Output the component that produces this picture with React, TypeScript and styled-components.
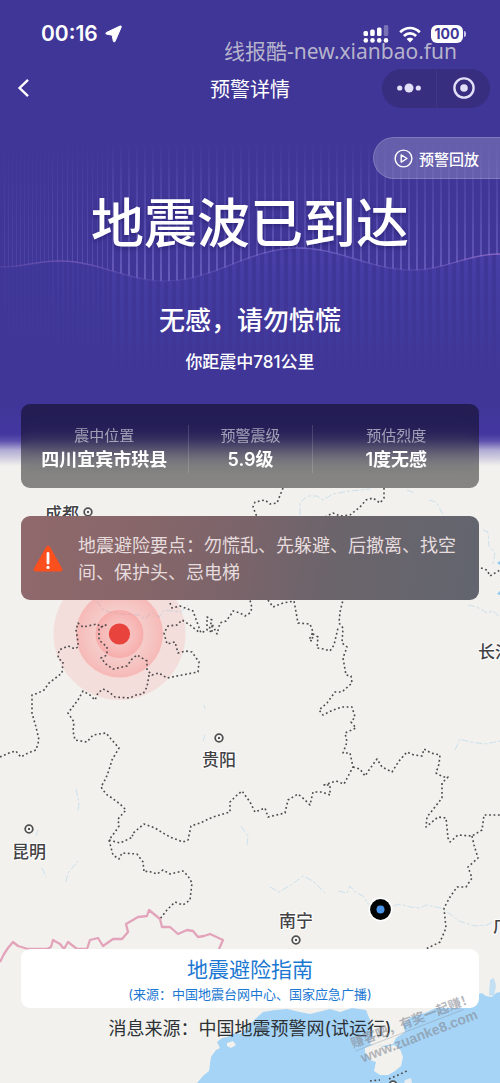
import React from "react";
import styled, { createGlobalStyle } from "styled-components";

const GlobalStyle = createGlobalStyle`
  *, *::before, *::after { box-sizing: border-box; }
  body {
    margin: 0;
    background: #f2f1ed;
    font-family: Inter, "Noto Sans CJK SC", sans-serif;
    -webkit-font-smoothing: antialiased;
  }
  button { font: inherit; color: inherit; border: 0; padding: 0; background: none; cursor: pointer; }
  h1, h2, p, dl, dt, dd { margin: 0; font-weight: inherit; }
`;

const Screen = styled.div`
  position: relative;
  display: flex;
  flex-direction: column;
  min-height: 100vh;
  overflow: hidden;
  color: #fff;
`;

const MapLayer = styled.svg`
  position: absolute;
  inset: 0;
  width: 100%;
  height: 100%;
`;

const HeroBackdrop = styled.div`
  position: absolute;
  top: 0;
  left: 0;
  right: 0;
  height: 470px;
  background: linear-gradient(
    to bottom,
    #3f3697 0,
    #3f3697 400px,
    #4337a0 434px,
    rgba(72, 58, 165, 0.88) 441px,
    rgba(110, 100, 185, 0.5) 450px,
    rgba(242, 241, 237, 0) 466px
  );
`;

const WaveArt = styled.svg`
  display: block;
  width: 100%;
  height: 400px;
`;

const Content = styled.div`
  position: relative;
  display: flex;
  flex: 1;
  flex-direction: column;
`;

const StatusBar = styled.div`
  display: flex;
  align-items: center;
  justify-content: space-between;
  height: 68px;
  padding: 0 37px 0 41px;
`;

const StatusGroup = styled.div<{ $gap: number }>`
  display: flex;
  align-items: center;
  gap: ${(p) => p.$gap}px;
`;

const Clock = styled.span`
  font: 600 21px/28px Inter, sans-serif;
`;

const Battery = styled.span`
  position: relative;
  width: 32px;
  height: 18px;
  border-radius: 6px;
  background: #fff;
  color: #3f3697;
  font: 700 14px/18px Inter, sans-serif;
  text-align: center;

  &::after {
    content: "";
    position: absolute;
    right: -3px;
    top: 6px;
    width: 2px;
    height: 6px;
    border-radius: 0 2px 2px 0;
    background: #c9c5e6;
  }
`;

const SiteMark = styled.span`
  position: absolute;
  top: 37px;
  right: 43px;
  color: rgba(205, 203, 214, 0.85);
  font: 400 21px/28px "Noto Sans", "Noto Sans CJK SC", sans-serif;
  white-space: nowrap;
`;

const NavBar = styled.header`
  display: grid;
  grid-template-columns: 1fr auto 1fr;
  align-items: center;
  height: 40px;
  padding: 0 10px;
`;

const BackButton = styled.button`
  display: flex;
  justify-self: start;
  padding: 0 6px;
`;

const NavTitle = styled.h1`
  padding-top: 4px;
  font-size: 20px;
  line-height: 28px;
`;

const Capsule = styled.div`
  display: grid;
  grid-template-columns: 1fr 1fr;
  justify-self: end;
  width: 108px;
  height: 39px;
  border-radius: 20px;
  background: #382e80;
`;

const CapsuleButton = styled.button`
  display: grid;
  place-items: center;

  & + & {
    border-left: 1px solid rgba(255, 255, 255, 0.04);
  }
`;

const ReplayButton = styled.button`
  display: flex;
  align-items: center;
  align-self: flex-end;
  gap: 6px;
  height: 42px;
  margin-top: 29px;
  padding: 0 21px 0 20px;
  border: 1px solid rgba(255, 255, 255, 0.18);
  border-right: 0;
  border-radius: 21px 0 0 21px;
  background: rgba(255, 255, 255, 0.2);
  font-size: 15px;
  font-weight: 500;
`;

const Headline = styled.h2`
  margin-top: 15px;
  font-size: 53px;
  font-weight: 500;
  line-height: 60px;
  text-align: center;
  text-shadow: 0 2px 4px rgba(20, 12, 80, 0.4);
`;

const Advice = styled.p`
  margin-top: 51px;
  font-size: 26px;
  font-weight: 500;
  line-height: 32px;
  text-align: center;
`;

const Distance = styled.p`
  margin-top: 13px;
  font-size: 17px;
  font-weight: 500;
  line-height: 24px;
  text-align: center;
`;

const Facts = styled.dl`
  display: grid;
  grid-template-columns: 4fr 3fr 4fr;
  margin: 30px 21px 0;
  padding: 21px 0 15px;
  border-radius: 9px;
  background: rgba(0, 0, 0, 0.45);
  backdrop-filter: blur(8px);
  text-align: center;
`;

const Fact = styled.div`
  & + & {
    border-left: 1px solid rgba(255, 255, 255, 0.14);
  }
`;

const FactLabel = styled.dt`
  color: rgba(255, 255, 255, 0.55);
  font-size: 15px;
  line-height: 22px;
`;

const FactValue = styled.dd`
  font-size: 18px;
  font-weight: 600;
  line-height: 26px;
`;

const Tips = styled.section`
  display: flex;
  align-items: center;
  gap: 15px;
  margin: 28px 21px 0;
  padding: 16px 18px 14px 12px;
  border-radius: 9px;
  background: linear-gradient(100deg, #90696c 0%, #876669 25%, #7a646a 48%, #6b646b 68%, #62656e 100%);
  color: #e6dcde;
  font-size: 18px;
  line-height: 27px;

  svg { flex: none; }
`;

const Footer = styled.footer`
  display: flex;
  flex-direction: column;
  gap: 7px;
  margin-top: auto;
  padding: 40px 21px 40px;
`;

const GuideButton = styled.button`
  display: flex;
  flex-direction: column;
  align-items: center;
  padding: 7px 0 4px;
  border-radius: 9px;
  background: #fff;
  color: #1b78d2;
`;

const GuideTitle = styled.span`
  font-size: 21px;
  line-height: 28px;
`;

const GuideSource = styled.span`
  font-size: 13px;
  line-height: 20px;
`;

const SourceNote = styled.p`
  color: #2c3136;
  font-size: 18px;
  line-height: 28px;
  text-align: center;
`;

const StampMark = styled.svg`
  position: absolute;
  right: 15px;
  bottom: 8px;
  width: 140px;
  height: 84px;
  pointer-events: none;
`;

const borders = [
  "M0 757L9 753L16 751L18 754L21 757L28 753L36 750L39 740L36 727L32 713L32 695L38 693L44 690L49 683L62 673L63 662L58 658L59 650L68 646L75 649L78 647L78 642L76 630L78 623L83 627L97 624L101 627L106 625L99 628L99 640L107 647L107 655L101 658L106 664L113 669L127 666L132 659L137 655L147 661L147 670L152 675L159 673L167 678L182 675L198 672L199 662L192 652L185 651L178 653L175 642L167 644L164 633L168 626L177 625L182 620L190 625L200 633",
  "M170 603L172 608L180 606L193 611L197 622L201 633L207 630L207 617L212 620L209 630L212 633L212 624L217 634L220 623L226 621L230 616L233 611L240 613L245 616L250 613L252 608L250 600",
  "M149 675L147 687L143 694L136 695L130 698L115 697L109 692L103 689L98 693L95 700L90 695L83 691L78 700L68 713L74 722L73 731L75 740L87 742L93 735L106 733L111 739L119 748L112 760L109 770L106 778L101 787L106 794L112 798L120 804L126 810L118 819L119 826L115 832L109 840L113 855L119 859L122 853L137 854L143 862L144 872L148 871L157 874L163 870L170 874L183 871L188 876L192 883L190 900L183 905L175 902L167 910L160 919",
  "M109 840L120 843L133 837L132 834L144 824L155 828L163 833L170 837L183 842L188 840L191 826L200 823L213 817L230 812L230 802L236 796L242 791L250 802L255 812L265 808L268 817L285 813L288 800L298 794L304 799L310 805L313 792L322 792L330 795L330 785L324 785L336 781L344 784L353 767L350 753L343 753L347 742L345 733L356 728L351 722L355 717L352 707L342 707L333 710L323 715L319 710L327 703L335 692L342 692L352 683L351 676L346 675L343 658L347 647L342 643L343 628L339 623L340 612L343 600",
  "M268 600L273 607L283 603L294 601L298 623L310 624L313 632L309 640L312 641L313 634L318 637L317 648L324 649L330 651L334 645L338 628",
  "M353 767L360 769L365 776L369 770L377 759L382 767L392 772L399 761L407 752L414 755L422 756L424 749L431 753L440 755L439 764L436 773L443 777L448 777L442 783L442 798L435 807L427 817L426 827L438 817L446 818L448 838L450 842L458 835L472 836L482 830L484 815L500 815",
  "M472 836L474 845L478 858L468 867L472 878L466 887L457 887L450 897L444 908L446 928L440 942L426 949",
  "M283 488L277 503L270 504L265 500L255 502L253 507L257 517",
  "M384 488L384 498L380 503L373 498L366 500L360 507L350 515L340 516L333 513L325 517",
  "M481 568L487 570L490 576L495 573L500 570",
  "M370 1081L380 1080M389 1079L407 1071",
];

const rivers = [
  "M300 515L300 503L307 496L317 496L323 500L333 494L350 491L360 490L370 489M407 490L415 493M429 500L436 502L440 509L444 516",
  "M97 601L104 611L122 614L139 615L145 619L152 612L159 617L164 610L181 612L188 605",
  "M483 530L488 532L489 546L495 553L493 564M468 605L477 607L487 613L493 611L500 617",
  "M38 830L36 836M76 789L79 803L78 812M42 868L46 877M66 882L68 873L78 861",
  "M241 826L248 836L247 845M203 741L205 735M204 705L205 709",
  "M270 887L279 892L291 885L303 876L313 881L325 893M338 891L347 893L350 886L355 892L363 896L368 904L386 908L400 904L410 907L420 908L426 905L441 908L450 914L459 921L475 926L487 925L495 921",
  "M455 750L460 739L470 742L485 744L500 741",
];

const nationalBorder =
  "M0 962L4 954L8 948L13 942L18 946L28 949L47 949L51 947L53 940L60 944L64 949L68 942L77 949L87 949L90 940L98 938L103 946L113 939L122 939L128 932L126 924L138 917L147 916L149 910L160 919L162 927L170 927L178 934L187 930L193 931L198 937L204 936L210 934L223 940L219 949";

const sea =
  "M197 1083L203 1076L209 1071L211 1057L216 1050L220 1048L217 1042L222 1038L227 1037L235 1033L240 1034L246 1029L254 1020L263 1012L275 1010L287 1009L300 1012L310 1014L330 1009L340 1012L352 1008L366 1010L370 1020L373 1035L370 1044L382 1046L393 1044L396 1038L405 1032L403 1024L411 1017L425 1013L440 1006L465 996L476 995L482 993L486 996L492 997L496 993L500 992V1083Z";

const hainan =
  "M365 1048L374 1044L384 1047L394 1045L400 1049L403 1057L401 1066L395 1071L388 1075L380 1075L374 1071L376 1062L370 1060L365 1052Z";

const cities = [
  { name: "成都", x: 45, y: 520, dotX: 88, dotY: 512 },
  { name: "贵阳", x: 202, y: 766, dotX: 219, dotY: 738 },
  { name: "昆明", x: 12, y: 858, dotX: 29, dotY: 829 },
  { name: "南宁", x: 279, y: 927, dotX: 296, dotY: 940 },
  { name: "长沙", x: 478, y: 658 },
  { name: "广州", x: 493, y: 932 },
];

// Height of the seismic curve, interpolated between its crests and troughs.
const wavePoints = [
  [0, 267], [60, 261], [165, 281], [298, 248], [412, 270], [500, 254],
];

function waveHeight(x: number) {
  for (let i = 1; i < wavePoints.length; i++) {
    const [x0, y0] = wavePoints[i - 1];
    const [x1, y1] = wavePoints[i];
    if (x <= x1) {
      const t = (1 - Math.cos((Math.PI * (x - x0)) / (x1 - x0))) / 2;
      return y0 + (y1 - y0) * t;
    }
  }
  return 254;
}

const stripes: number[] = [];
for (let x = 4; x < 500; x += x < 50 ? 4 : x < 110 ? 5 : 8) stripes.push(x);

const curve = Array.from({ length: 101 }, (_, i) => `${i ? "L" : "M"}${i * 5} ${waveHeight(i * 5).toFixed(1)}`).join("");

function Wave() {
  return (
    <WaveArt viewBox="0 0 500 400" preserveAspectRatio="none" aria-hidden="true">
      <defs>
        <linearGradient id="above" gradientUnits="userSpaceOnUse" x1="0" y1="140" x2="0" y2="275">
          <stop offset="0" stopColor="#8a7fe0" stopOpacity="0" />
          <stop offset="0.4" stopColor="#8a7fe0" stopOpacity="0.2" />
          <stop offset="1" stopColor="#9a8be6" stopOpacity="0.42" />
        </linearGradient>
        <linearGradient id="below" gradientUnits="userSpaceOnUse" x1="0" y1="250" x2="0" y2="375">
          <stop offset="0" stopColor="#5a50c8" stopOpacity="0.32" />
          <stop offset="1" stopColor="#5a50c8" stopOpacity="0" />
        </linearGradient>
        <linearGradient id="crest" x1="0" y1="0" x2="1" y2="0">
          <stop offset="0" stopColor="#9b6cc4" stopOpacity="0.2" />
          <stop offset="0.13" stopColor="#a479cf" stopOpacity="0.45" />
          <stop offset="0.33" stopColor="#7462c8" stopOpacity="0.2" />
          <stop offset="0.6" stopColor="#8f7be0" stopOpacity="0.6" />
          <stop offset="0.82" stopColor="#7462c8" stopOpacity="0.3" />
          <stop offset="1" stopColor="#a67ad6" stopOpacity="0.75" />
        </linearGradient>
      </defs>
      {stripes.map((x) => (
        <g key={x} opacity={x < 50 ? 0.4 : x < 110 ? 0.7 : 1}>
          <rect x={x} y={140} width={x < 110 ? 1 : 2} height={waveHeight(x) - 140} fill="url(#above)" />
          <rect x={x} y={waveHeight(x)} width={x < 110 ? 2 : 4} height={375 - waveHeight(x)} fill="url(#below)" />
        </g>
      ))}
      <path d={curve} fill="none" stroke="url(#crest)" strokeWidth="1.4" />
    </WaveArt>
  );
}

function RegionMap() {
  return (
    <MapLayer viewBox="0 0 500 1083" preserveAspectRatio="xMidYMid slice">
      <defs>
        <radialGradient id="ring">
          <stop offset="0.5" stopColor="#ff6b6b" stopOpacity="0.14" />
          <stop offset="1" stopColor="#ff5a5a" stopOpacity="0.28" />
        </radialGradient>
      </defs>
      <rect width="500" height="1083" fill="#f2f1ed" />
      <path d={sea} fill="#a6d4f6" />
      <path d={hainan} fill="#f2f1ed" />
      <path d="M227 1043L233 1041L236 1045L231 1048L227 1046Z" fill="#f2f1ed" />
      <path d="M490 980L494 978L496 986L494 996L489 995Z" fill="#c3dff3" />
      <path d="M405 1080L411 1078L412 1083L404 1083Z" fill="#e6ecef" />
      <path d="M497 563L500 561V565ZM497 594L500 591V595Z" fill="#8cc8f4" />
      {rivers.map((d) => (
        <path key={d} d={d} fill="none" stroke="#c2dcec" strokeWidth="1" strokeDasharray="7 2 3 2" opacity="0.8" />
      ))}
      <circle cx="119.5" cy="634" r="66" fill="#ff5a5a" fillOpacity="0.12" />
      <circle cx="119.5" cy="634" r="43.5" fill="url(#ring)" />
      <circle cx="119.5" cy="634" r="24" fill="url(#ring)" />
      {borders.map((d) => (
        <path
          key={d}
          d={d}
          fill="none"
          stroke="#4c4a4c"
          strokeWidth="1.6"
          strokeDasharray="1.8 2.6"
          strokeLinejoin="round"
        />
      ))}
      <path d={nationalBorder} fill="none" stroke="#e3a3bb" strokeWidth="2.3" strokeLinejoin="round" />
      <circle cx="119.5" cy="634" r="10.6" fill="#e8433c" />
      {cities.map((c) => (
        <g key={c.name}>
          {c.dotX !== undefined && (
            <>
              <circle cx={c.dotX} cy={c.dotY} r="3.8" fill="#fff" stroke="#505050" strokeWidth="1.8" />
              <circle cx={c.dotX} cy={c.dotY} r="1.2" fill="#505050" />
            </>
          )}
          <text
            x={c.x}
            y={c.y}
            fontSize="17"
            fontWeight="500"
            fill="#434345"
            stroke="#fff"
            strokeWidth="2"
            paintOrder="stroke"
          >
            {c.name}
          </text>
        </g>
      ))}
      <circle cx="393" cy="1085" r="3.8" fill="#fff" stroke="#505050" strokeWidth="1.8" />
      <circle cx="380.5" cy="909.5" r="12" fill="#fff" />
      <circle cx="380.5" cy="909.5" r="10.4" fill="#020305" />
      <circle cx="380.5" cy="909.5" r="4" fill="#4a94e8" />
    </MapLayer>
  );
}

const facts = [
  { label: "震中位置", value: "四川宜宾市珙县" },
  { label: "预警震级", value: "5.9级" },
  { label: "预估烈度", value: "1度无感" },
];

export default function App() {
  return (
    <>
      <GlobalStyle />
      <Screen>
        <RegionMap />
        <HeroBackdrop>
          <Wave />
        </HeroBackdrop>
        <Content>
          <StatusBar>
            <StatusGroup $gap={7}>
              <Clock>00:16</Clock>
              <svg width="17" height="18" viewBox="0 0 17 18" fill="#fff" stroke="#fff" strokeWidth="1" strokeLinejoin="round" aria-hidden="true">
                <path d="M15.2 1 1.2 7.6C.5 8 .6 8.9 1.4 9.1L7.2 10.2 8.3 16.2c.2.9 1.4 1 1.8.1L16.2 2.2C16.6 1.3 16 .7 15.2 1Z" />
              </svg>
            </StatusGroup>
            <StatusGroup $gap={10}>
              <svg width="26" height="18" viewBox="0 0 26 18" fill="#fff" aria-hidden="true">
                <rect x="0.5" y="6" width="4.5" height="5" rx="1.5" />
                <rect x="7.2" y="4.5" width="4.5" height="6.5" rx="1.5" />
                <rect x="14" y="2.5" width="4.5" height="8.5" rx="1.5" />
                <rect x="20.8" y="0" width="4.5" height="11" rx="1.5" opacity="0.3" />
                <circle cx="2.8" cy="15.4" r="2.3" />
                <circle cx="9.5" cy="15.4" r="2.3" />
                <circle cx="16.2" cy="15.4" r="2.3" />
                <circle cx="23" cy="15.4" r="2.3" />
              </svg>
              <svg width="22" height="17" viewBox="0 0 22 17" aria-hidden="true">
                <g fill="none" stroke="#fff" strokeWidth="2.7">
                  <path d="M1.2 6.2C6.8.6 15.2.6 20.8 6.2" />
                  <path d="M4.9 10C8.5 6.5 13.5 6.5 17.1 10" />
                </g>
                <path d="M11 16.5 7.6 13C9.4 11.2 12.6 11.2 14.4 13Z" fill="#fff" />
              </svg>
              <Battery>100</Battery>
            </StatusGroup>
          </StatusBar>
          <SiteMark>线报酷-new.xianbao.fun</SiteMark>

          <NavBar>
            <BackButton aria-label="返回">
              <svg width="16" height="20" viewBox="0 0 16 20" fill="none" stroke="#fff" strokeWidth="2.4" aria-hidden="true">
                <path d="M12 1.8 3.6 10 12 18.2" />
              </svg>
            </BackButton>
            <NavTitle>预警详情</NavTitle>
            <Capsule>
              <CapsuleButton aria-label="更多">
                <svg width="26" height="10" viewBox="0 0 26 10" fill="#e2dff8" aria-hidden="true">
                  <circle cx="3.7" cy="5" r="2.6" />
                  <circle cx="13" cy="5" r="4.5" />
                  <circle cx="22.3" cy="5" r="2.6" />
                </svg>
              </CapsuleButton>
              <CapsuleButton aria-label="关闭">
                <svg width="22" height="22" viewBox="0 0 22 22" fill="none" aria-hidden="true">
                  <circle cx="11" cy="11" r="9.6" stroke="#e2dff8" strokeWidth="2.4" />
                  <circle cx="11" cy="11" r="3.8" fill="#e2dff8" />
                </svg>
              </CapsuleButton>
            </Capsule>
          </NavBar>

          <ReplayButton>
            <svg width="19" height="19" viewBox="0 0 19 19" fill="none" stroke="#fff" strokeWidth="1.4" aria-hidden="true">
              <circle cx="9.5" cy="9.5" r="8.4" />
              <path d="M7.2 5.9v7.2L13 9.5Z" strokeLinejoin="round" />
            </svg>
            预警回放
          </ReplayButton>

          <Headline>地震波已到达</Headline>
          <Advice>无感，请勿惊慌</Advice>
          <Distance>你距震中781公里</Distance>

          <Facts>
            {facts.map((f) => (
              <Fact key={f.label}>
                <FactLabel>{f.label}</FactLabel>
                <FactValue>{f.value}</FactValue>
              </Fact>
            ))}
          </Facts>

          <Tips>
            <svg width="30" height="28" viewBox="0 0 30 28" aria-hidden="true">
              <path
                d="M13.2 1.8a2.2 2.2 0 0 1 3.7 0L29 23.3a2 2 0 0 1-1.8 3.1H2.8A2 2 0 0 1 1 23.3Z"
                fill="#fb4f1e"
              />
              <path d="M15 8.5v9.5" stroke="#fff" strokeWidth="2.8" strokeLinecap="round" />
              <circle cx="15" cy="22.4" r="1.6" fill="#fff" />
            </svg>
            <p>地震避险要点：勿慌乱、先躲避、后撤离、找空间、保护头、忌电梯</p>
          </Tips>

          <Footer>
            <GuideButton>
              <GuideTitle>地震避险指南</GuideTitle>
              <GuideSource>(来源：中国地震台网中心、国家应急广播)</GuideSource>
            </GuideButton>
            <SourceNote>消息来源：中国地震预警网(试运行)</SourceNote>
          </Footer>

          <StampMark viewBox="0 0 140 84" aria-hidden="true">
            <g transform="translate(17 72) rotate(-21)" fill="#858992" fillOpacity="0.6" fontWeight="700">
              <text x="-3" y="-17" fontSize="13">赚客吧，有奖一起赚！</text>
              <path d="M-2 -13.5H114" stroke="#8b8f98" strokeOpacity="0.4" strokeWidth="1" />
              <text x="1" y="0" fontSize="14" fontFamily="Liberation Sans, sans-serif">www.zuanke8.com</text>
            </g>
          </StampMark>
        </Content>
      </Screen>
    </>
  );
}
